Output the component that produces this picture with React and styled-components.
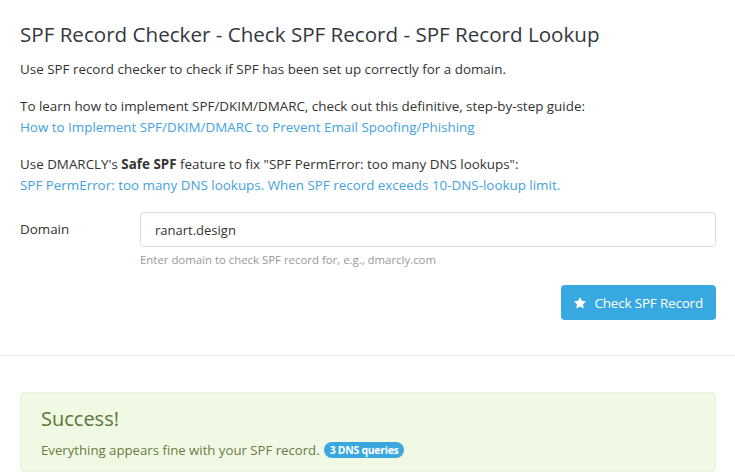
import React from "react";
import styled, { createGlobalStyle } from "styled-components";

const Global = createGlobalStyle`
  html, body { margin: 0; padding: 0; background: #fff; }
  body { font-family: "Open Sans", "Noto Sans", sans-serif; color: #333; }
  * { box-sizing: border-box; }
`;

const Page = styled.div`
  width: 735px;
  height: 475px;
  overflow: hidden;
`;

const Top = styled.section`
  padding: 20px 19px 0 20px;
`;

const Title = styled.h1`
  margin: 0 0 11px;
  font-size: 20.6px;
  font-weight: 500;
  color: #33383e;
  line-height: 28px;
`;

const P = styled.p`
  margin: 0 0 16px;
  font-size: 13.4px;
  line-height: 21px;
  color: #333;
`;

const A = styled.a`
  color: #44a2e0;
  text-decoration: none;
`;

const Row = styled.div`
  display: grid;
  grid-template-columns: 120px 1fr;
  align-items: start;
  margin-top: 1px;
`;

const Label = styled.label`
  font-size: 13.4px;
  line-height: 35px;
  color: #333;
`;

const Field = styled.div`
  display: flex;
  flex-direction: column;
`;

const Input = styled.input`
  height: 35px;
  border: 1px solid #ddd;
  border-radius: 4px;
  padding: 0 14px;
  font-family: inherit;
  font-size: 13px;
  color: #333;
  outline: none;
`;

const Help = styled.span`
  margin-top: 5px;
  font-size: 11.4px;
  color: #999;
`;

const Actions = styled.div`
  display: flex;
  justify-content: flex-end;
  margin-top: 18px;
`;

const Button = styled.button`
  display: flex;
  align-items: center;
  gap: 7px;
  height: 35px;
  padding: 0 13px 0 12px;
  background: #38a9e0;
  border: none;
  border-radius: 4px;
  color: #fff;
  font-family: inherit;
  font-size: 13.5px;
  letter-spacing: -0.2px;
`;

const Rule = styled.hr`
  margin: 35px 0 0;
  border: none;
  border-top: 1px solid #e6e6e6;
`;

const Bottom = styled.section`
  padding: 36px 19px 0 20px;
`;

const Alert = styled.div`
  background: #f0f9e4;
  border: 1px solid #e8f3da;
  border-radius: 4px;
  padding: 12px 20px 11px;
  color: #6b7a45;
`;

const AlertTitle = styled.h2`
  margin: 0 0 7px;
  font-size: 20px;
  font-weight: 500;
  line-height: 28px;
  color: #5a7537;
`;

const AlertText = styled.div`
  font-size: 13.2px;
  line-height: 20px;
`;

const Badge = styled.span`
  display: inline-block;
  margin-left: 4px;
  padding: 0 6px;
  background: #3aa7de;
  color: #fff;
  border-radius: 10px;
  font-size: 10.5px;
  font-weight: 700;
  line-height: 16px;
  letter-spacing: -0.3px;
  vertical-align: 1px;
`;

const Star = () => (
  <svg width="14" height="14" viewBox="0 0 24 24" fill="#fff">
    <path d="M12 1.5l3.2 6.6 7.2 1-5.2 5 1.3 7.2L12 17.9l-6.5 3.4 1.3-7.2-5.2-5 7.2-1z" />
  </svg>
);

export default function App() {
  return (
    <Page>
      <Global />
      <Top>
        <Title>SPF Record Checker - Check SPF Record - SPF Record Lookup</Title>
        <P>Use SPF record checker to check if SPF has been set up correctly for a domain.</P>
        <P>
          To learn how to implement SPF/DKIM/DMARC, check out this definitive, step-by-step guide:
          <br />
          <A href="#">How to Implement SPF/DKIM/DMARC to Prevent Email Spoofing/Phishing</A>
        </P>
        <P>
          Use DMARCLY's <b>Safe SPF</b> feature to fix "SPF PermError: too many DNS lookups":
          <br />
          <A href="#">SPF PermError: too many DNS lookups. When SPF record exceeds 10-DNS-lookup limit.</A>
        </P>
        <Row>
          <Label>Domain</Label>
          <Field>
            <Input defaultValue="ranart.design" />
            <Help>Enter domain to check SPF record for, e.g., dmarcly.com</Help>
          </Field>
        </Row>
        <Actions>
          <Button>
            <Star />
            Check SPF Record
          </Button>
        </Actions>
      </Top>
      <Rule />
      <Bottom>
        <Alert>
          <AlertTitle>Success!</AlertTitle>
          <AlertText>
            Everything appears fine with your SPF record.<Badge>3 DNS queries</Badge>
          </AlertText>
        </Alert>
      </Bottom>
    </Page>
  );
}
